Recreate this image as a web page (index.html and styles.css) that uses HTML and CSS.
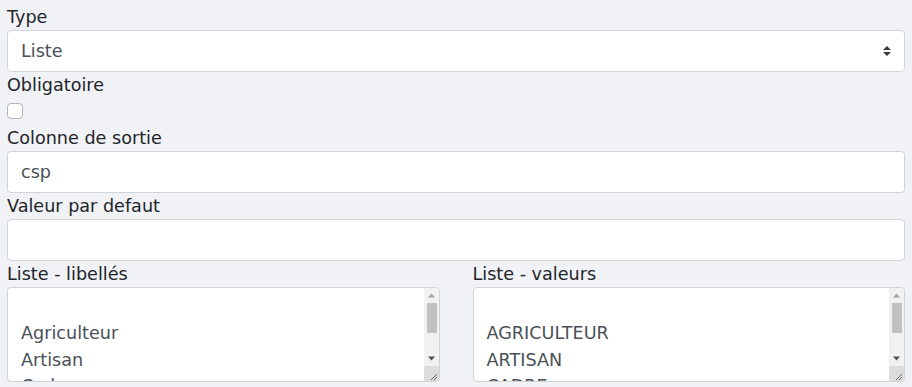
FILE: index.html
```html
<!DOCTYPE html>
<html lang="fr">
<head>
<meta charset="utf-8">
<link rel="stylesheet" href="styles.css">
</head>
<body>
<form class="form">
  <div class="field">
    <label class="label" for="type">Type</label>
    <select class="control select" id="type"><option>Liste</option></select>
  </div>
  <div class="field">
    <label class="label" for="oblig">Obligatoire</label>
    <div class="check-wrap"><input type="checkbox" class="check" id="oblig"></div>
  </div>
  <div class="field">
    <label class="label" for="col">Colonne de sortie</label>
    <input class="control" id="col" type="text" value="csp">
  </div>
  <div class="field">
    <label class="label" for="def">Valeur par defaut</label>
    <input class="control" id="def" type="text" value="">
  </div>
  <div class="grid">
    <div class="field">
      <label class="label" for="lib">Liste - libellés</label>
      <div class="area-wrap">
        <textarea class="control area" id="lib">

Agriculteur
Artisan
Cadre
Employé
Ouvrier</textarea>
        <div class="sb" aria-hidden="true">
          <div class="sb-btn"><svg width="9" height="5" viewBox="0 0 9 5"><path d="M4.5 0.5L8 4.5H1z" fill="#a3a3a3"/></svg></div>
          <div class="sb-track"><div class="sb-thumb"></div></div>
          <div class="sb-btn"><svg width="9" height="5" viewBox="0 0 9 5"><path d="M1 0.5h7L4.5 4.5z" fill="#505050"/></svg></div>
          <div class="sb-corner"><svg width="14" height="15" viewBox="0 0 14 15"><path d="M13 8L7 14M13 11L10 14" stroke="#6b6b6b" stroke-width="1" fill="none"/></svg></div>
        </div>
      </div>
    </div>
    <div class="field">
      <label class="label" for="val">Liste - valeurs</label>
      <div class="area-wrap">
        <textarea class="control area" id="val">

AGRICULTEUR
ARTISAN
CADRE
EMPLOYE
OUVRIER</textarea>
        <div class="sb" aria-hidden="true">
          <div class="sb-btn"><svg width="9" height="5" viewBox="0 0 9 5"><path d="M4.5 0.5L8 4.5H1z" fill="#a3a3a3"/></svg></div>
          <div class="sb-track"><div class="sb-thumb"></div></div>
          <div class="sb-btn"><svg width="9" height="5" viewBox="0 0 9 5"><path d="M1 0.5h7L4.5 4.5z" fill="#505050"/></svg></div>
          <div class="sb-corner"><svg width="14" height="15" viewBox="0 0 14 15"><path d="M13 8L7 14M13 11L10 14" stroke="#6b6b6b" stroke-width="1" fill="none"/></svg></div>
        </div>
      </div>
    </div>
  </div>
</form>
</body>
</html>
```

FILE: styles.css
```css
* { box-sizing: border-box; }
html, body { margin: 0; padding: 0; }
body {
  background: #f1f2f6;
  font-family: "DejaVu Sans", sans-serif;
  font-size: 17.6px;
  line-height: 26px;
  color: #212529;
  overflow: hidden;
}
.form {
  padding: 4px 7px 0 7px;
  display: flex;
  flex-direction: column;
}
.field {
  display: flex;
  flex-direction: column;
}
.label {
  display: block;
  line-height: 26px;
}
.control {
  display: block;
  width: 100%;
  height: 42px;
  padding: 7px 13px;
  font-family: "DejaVu Sans", sans-serif;
  font-size: 17.6px;
  line-height: 26px;
  color: #495057;
  background-color: #fff;
  border: 1px solid #ced4da;
  border-radius: 4px;
  margin: 0;
  outline: none;
}
.select {
  appearance: none;
  -webkit-appearance: none;
  padding-right: 32px;
  background-image: url("data:image/svg+xml,%3csvg xmlns='http://www.w3.org/2000/svg' width='4' height='5' viewBox='0 0 4 5'%3e%3cpath fill='%23343a40' d='M2 0L0 2h4zm0 5L0 3h4z'/%3e%3c/svg%3e");
  background-repeat: no-repeat;
  background-position: right 13px center;
  background-size: 8px 10px;
}
.check-wrap {
  height: 27px;
  padding-top: 5px;
}
.check {
  appearance: none;
  -webkit-appearance: none;
  display: block;
  width: 16px;
  height: 16px;
  margin: 0;
  background: #fff;
  border: 1px solid #adb5bd;
  border-radius: 4px;
}
.grid {
  display: grid;
  grid-template-columns: 1fr 1fr;
  column-gap: 33px;
}
.area-wrap {
  position: relative;
}
.area {
  height: 95px;
  padding: 6px 24px 6px 13px;
  line-height: 26.4px;
  resize: none;
  overflow: hidden;
}
.sb {
  position: absolute;
  top: 1px;
  right: 1px;
  bottom: 1px;
  width: 15px;
  display: flex;
  flex-direction: column;
  background: #f1f1f1;
  border-radius: 0 3px 3px 0;
  overflow: hidden;
}
.sb-btn {
  height: 15px;
  flex: none;
  display: flex;
  align-items: center;
  justify-content: center;
}
.sb-btn svg { display: block; }
.sb-track {
  flex: 1;
  padding: 0 2px 0 3px;
}
.sb-thumb {
  height: 30px;
  background: #c1c1c1;
}
.sb-corner {
  height: 15px;
  flex: none;
  background: #dcdcdc;
}
.sb-corner svg { display: block; }
```
